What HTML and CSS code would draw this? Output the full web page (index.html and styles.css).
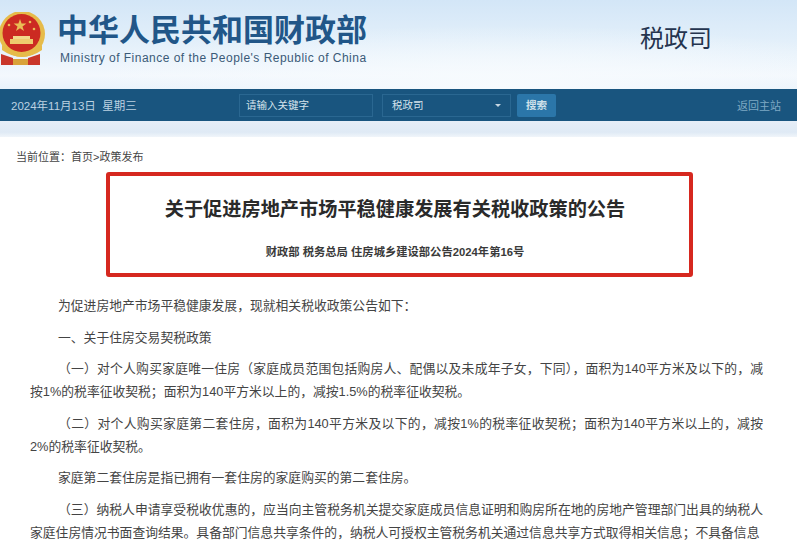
FILE: index.html
```html
<!DOCTYPE html>
<html lang="zh-CN">
<head>
    <meta charset="UTF-8">
    <title>关于促进房地产市场平稳健康发展有关税收政策的公告</title>
    <link rel="stylesheet" href="styles.css">
</head>
<body>
    <div class="page">
        <header class="masthead">
            <svg class="emblem" viewBox="0 0 48 56" width="48" height="56">
                <circle cx="23" cy="22" r="23" fill="#e6bb4a"/>
                <circle cx="22.5" cy="21" r="19" fill="#cc2a22"/>
                <polygon points="21,7 22.6,11.6 27.4,11.6 23.5,14.4 25,19 21,16.2 17,19 18.5,14.4 14.6,11.6 19.4,11.6" fill="#e9bd55"/>
                <circle cx="10" cy="13" r="1.3" fill="#e9bd55"/>
                <circle cx="31" cy="10" r="1.3" fill="#e9bd55"/>
                <circle cx="35" cy="17" r="1.3" fill="#e9bd55"/>
                <rect x="14" y="24" width="17" height="3" fill="#f2d88a"/>
                <rect x="11" y="27" width="23" height="5" fill="#eecb6e"/>
                <path d="M3 33 Q23 48 43 33 L43 38 Q23 52 3 38 Z" fill="#e6bb4a"/>
                <path d="M2 42 L14 46 L14 53 L2 53 Z" fill="#c9362a"/>
                <path d="M41 42 L29 46 L29 53 L41 53 Z" fill="#c9362a"/>
                <rect x="14" y="47" width="15" height="6" fill="#d9a23a"/>
            </svg>
            <div class="brand">
                <div class="brand-cn">中华人民共和国财政部</div>
                <div class="brand-en">Ministry of Finance of the People's Republic of China</div>
            </div>
            <div class="dept">税政司</div>
        </header>
        <nav class="navbar">
            <div class="date">2024年11月13日&nbsp;&nbsp;星期三</div>
            <div class="search">
                <div class="field keyword">请输入关键字</div>
                <div class="field scope">税政司<span class="caret"></span></div>
                <div class="search-btn">搜索</div>
            </div>
            <a class="back" href="#">返回主站</a>
        </nav>
        <div class="band"></div>
        <div class="crumb">当前位置&#xFF1A;首页&gt;政策发布</div>
        <div class="notice">
            <h1>关于促进房地产市场平稳健康发展有关税收政策的公告</h1>
            <p class="docno">财政部 税务总局 住房城乡建设部公告2024年第16号</p>
        </div>
        <main class="article">
            <p>为促进房地产市场平稳健康发展&#xFF0C;现就相关税收政策公告如下&#xFF1A;</p>
            <p>一、关于住房交易契税政策</p>
            <p>&#xFF08;一&#xFF09;对个人购买家庭唯一住房&#xFF08;家庭成员范围包括购房人、配偶以及未成年子女&#xFF0C;下同&#xFF09;&#xFF0C;面积为140平方米及以下的&#xFF0C;减按1%的税率征收契税&#xFF1B;面积为140平方米以上的&#xFF0C;减按1.5%的税率征收契税。</p>
            <p>&#xFF08;二&#xFF09;对个人购买家庭第二套住房&#xFF0C;面积为140平方米及以下的&#xFF0C;减按1%的税率征收契税&#xFF1B;面积为140平方米以上的&#xFF0C;减按2%的税率征收契税。</p>
            <p>家庭第二套住房是指已拥有一套住房的家庭购买的第二套住房。</p>
            <p>&#xFF08;三&#xFF09;纳税人申请享受税收优惠的&#xFF0C;应当向主管税务机关提交家庭成员信息证明和购房所在地的房地产管理部门出具的纳税人家庭住房情况书面查询结果。具备部门信息共享条件的&#xFF0C;纳税人可授权主管税务机关通过信息共享方式取得相关信息&#xFF1B;不具备信息</p>
        </main>
    </div>
</body>
</html>
```

FILE: styles.css
```css
html, body { margin: 0; height: 541px; overflow: hidden; background: #fff; }
body { font-family: "Liberation Sans", "Noto Sans CJK SC", sans-serif; color: #333; }
.page { width: 799px; height: 541px; overflow: hidden; }
.masthead { height: 89px; width: 797px; display: flex; align-items: flex-start; background: radial-gradient(ellipse 420px 60px at 500px 85px, #f7fbfe 0%, rgba(247,251,254,0) 100%), linear-gradient(180deg, #d3e6f7 0%, #e2effa 45%, #f3f8fd 85%, #e8f2fb 100%); }
.emblem { flex: none; margin: 12px 10px 0 -1px; }
.brand { width: 320px; padding-top: 13px; }
.brand-cn { font-size: 31px; line-height: 36px; font-weight: 700; color: #215688; white-space: nowrap; }
.brand-en { font-size: 12px; line-height: 14px; margin: 2px 0 0 3px; color: #3a5a78; letter-spacing: 0.48px; white-space: nowrap; }
.dept { margin: 23px 0 0 263px; font-size: 24px; line-height: 32px; color: #24344f; }
.navbar { width: 797px; height: 32px; background: #19557f; display: flex; align-items: center; color: #bcd2e2; font-size: 11.5px; box-sizing: border-box; padding: 0 16px 0 11px; }
.date { width: 228px; white-space: nowrap; }
.search { display: flex; align-items: center; gap: 8px; }
.field { height: 23px; line-height: 21px; border: 1px solid #2a6791; box-sizing: border-box; color: #d5e3ec; padding-left: 6px; font-size: 10.5px; }
.keyword { width: 134px; }
.scope { width: 129px; margin-left: 1px; position: relative; padding-left: 9px; }
.caret { position: absolute; right: 9px; top: 9px; border: 3px solid transparent; border-top-color: #c5d6e2; }
.search-btn { width: 39px; height: 23px; line-height: 23px; text-align: center; background: #2b76a9; color: #cfe0ea; border-radius: 2px; font-size: 10.5px; font-weight: 700; margin-left: -2px; }
.back { margin-left: auto; color: #7fa9c4; text-decoration: none; font-size: 11px; }
.band { width: 797px; height: 16px; background: linear-gradient(180deg, #e6eef7, #dfeaf5 70%, #f0f5fa); }
.crumb { font-size: 11px; line-height: 14px; color: #444; margin: 13px 0 0 16px; }
.notice { box-sizing: border-box; width: 587px; height: 105px; margin: 8px 0 0 106px; padding-right: 9px; border: 4px solid #d6281f; border-radius: 3px; text-align: center; }
.notice h1 { margin: 0; padding-top: 21px; font-size: 19.2px; line-height: 26px; font-weight: 700; color: #2a2a2a; white-space: nowrap; }
.docno { margin: 21px 0 0; font-size: 11.3px; line-height: 16px; font-weight: 700; color: #3a3a3a; }
.article { box-sizing: border-box; width: 799px; padding: 17px 36px 0 30px; }
.article p { margin: 0 0 8.6px; font-size: 12.8px; line-height: 23px; text-indent: 28px; text-align: justify; color: #444; }
.article p:last-child { margin-bottom: 0; }
```
